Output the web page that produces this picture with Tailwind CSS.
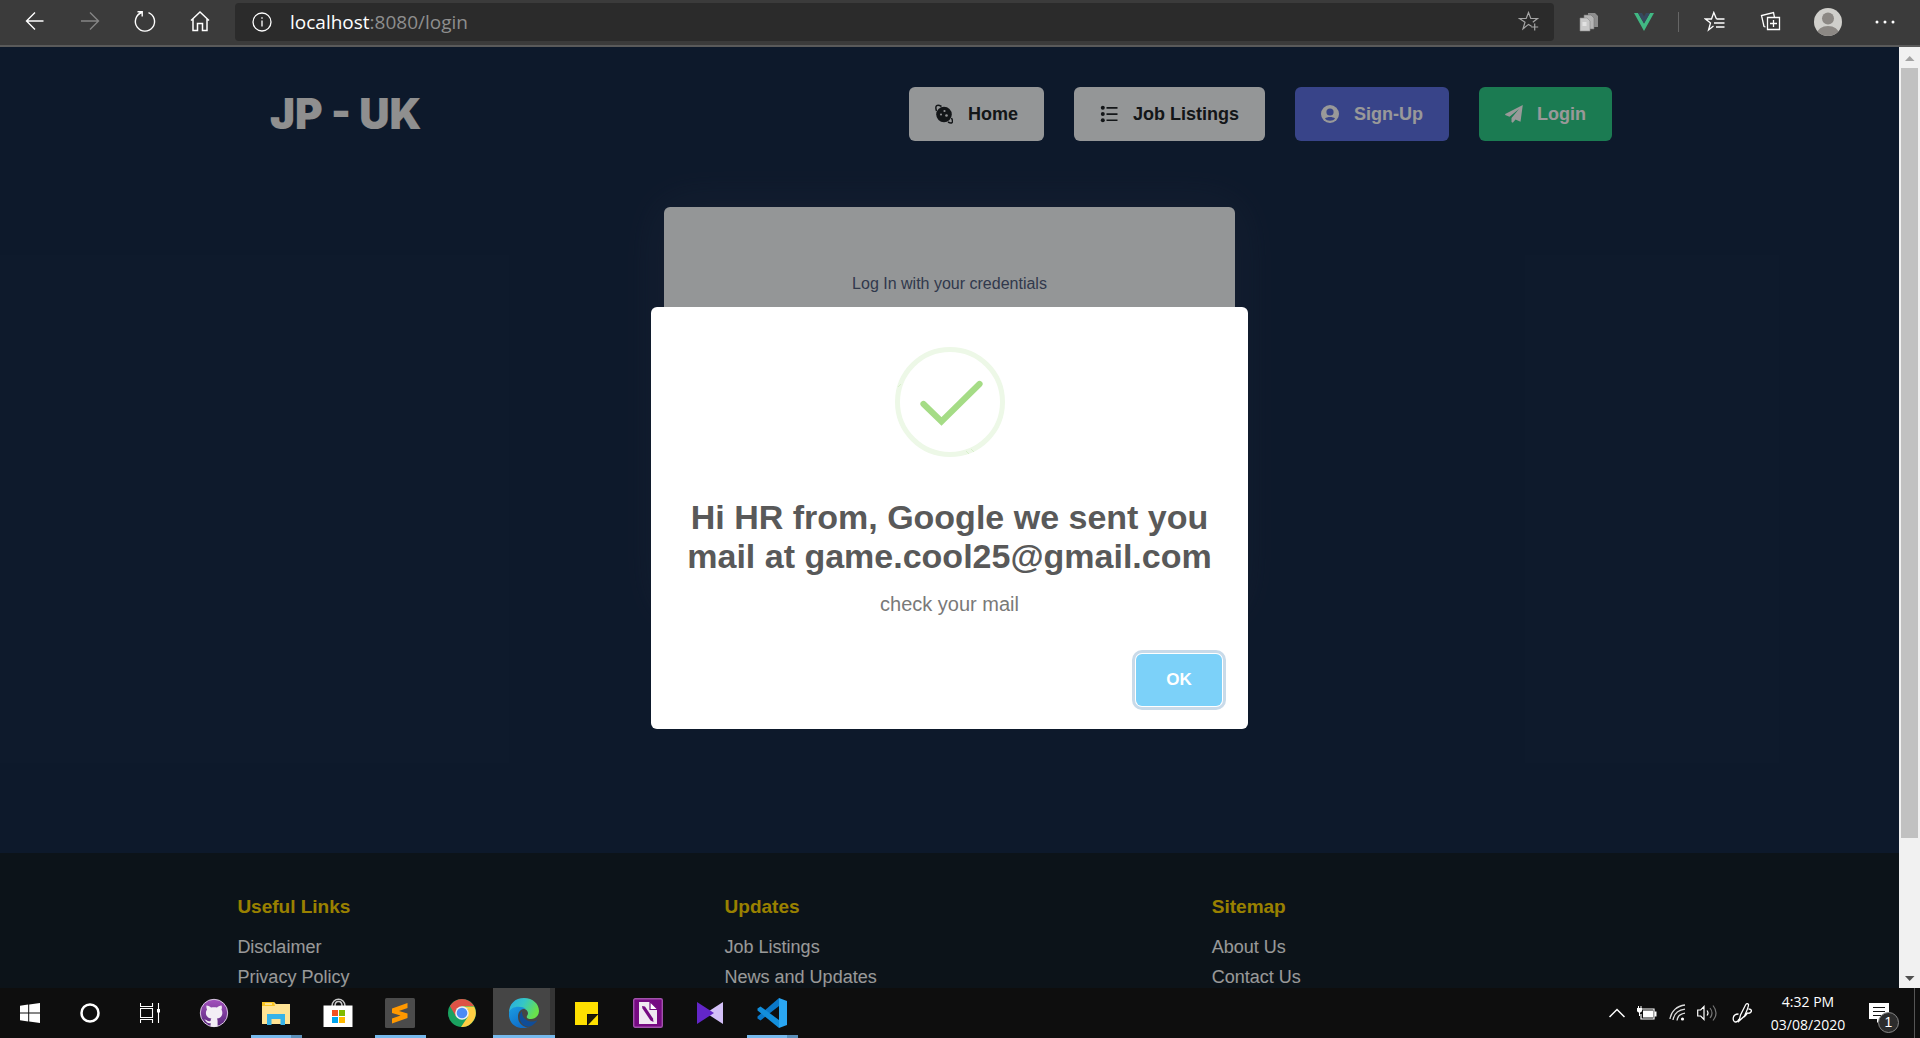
<!DOCTYPE html>
<html lang="en">
<head>
<meta charset="utf-8">
<title>JP - UK Login</title>
<script src="https://cdn.jsdelivr.net/npm/@tailwindcss/browser@4"></script>
</head>
<body class="flex h-screen flex-col overflow-hidden bg-black font-['Liberation_Sans',Arial,sans-serif]">

<!-- Browser toolbar -->
<header class="flex h-[47px] shrink-0 items-start border-b-2 border-[#5a5a5a] bg-[#3b3b3b] pt-[3px] text-white">
  <nav class="flex h-[38px] w-[235px] shrink-0 items-center pl-[7px]" aria-label="Browser">
    <button class="flex w-[55px] justify-center" aria-label="Back"><svg width="24" height="24" viewBox="0 0 24 24" fill="none" stroke="#fff" stroke-width="1.4"><path d="M20.500 11H4M12 2.500L3.500 11L12 19.500"/></svg></button>
    <button class="flex w-[55px] justify-center text-[#858585]" aria-label="Forward"><svg width="24" height="24" viewBox="0 0 24 24" fill="none" stroke="currentColor" stroke-width="1.400"><path d="M3 11h17M12 2.500l8.500 8.500L12 19.500"/></svg></button>
    <button class="flex w-[55px] justify-center" aria-label="Refresh"><svg width="24" height="24" viewBox="0 0 24 24" fill="none" stroke="#fff" stroke-width="1.400"><path d="M15.500 2.600A9.600 9.600 0 1 1 8.700 2.500M4.500 1.700h4.700v4.900"/></svg></button>
    <button class="flex w-[55px] justify-center" aria-label="Home page"><svg width="24" height="24" viewBox="0 0 24 24" fill="none" stroke="#fff" stroke-width="1.500"><path d="M3 10.500L12 2L21 10.500M5 9V20.500h4.500v-7h5v7H19V9"/></svg></button>
  </nav>
  <div class="flex h-[38px] flex-1 items-center rounded bg-[#2b2b2b] pr-[14px] pl-[17px]">
    <svg class="shrink-0" width="20" height="20" viewBox="0 0 20 20" fill="none" stroke="#fff" stroke-width="1.300"><circle cx="10" cy="10" r="9"/><path d="M10 8.500v6M10 5.200v1.600"/></svg>
    <p class="flex-1 pl-[18px] font-['Open_Sans','Noto_Sans',sans-serif] text-[19px] leading-[26px] text-[#8e8e8e]"><span class="text-white">localhost</span>:8080/login</p>
    <button aria-label="Add to favorites"><svg width="22" height="22" viewBox="0 0 22 22" fill="none" stroke="#a5a5a5" stroke-width="1.200"><path d="M13.500 15.200L10.500 13.400L5 17.800L7 11.200L1.500 7.500H8.200L10.500 1.500L12.800 7.500H19.500L14.800 11.200M16.700 12.500v7M13.200 16h7"/></svg></button>
  </div>
  <div class="flex h-[38px] w-[366px] shrink-0 items-center">
    <button class="flex w-[70px] justify-center" aria-label="Copy extension"><svg width="20" height="20" viewBox="0 0 20 20"><path d="M9 1h7l3 3v11H9z" fill="#8e8e8e"/><path d="M5 3h7l3 3v11H5z" fill="#b5b5b5" stroke="#777" stroke-width=".6"/><path d="M1 6h7l3 3v10H1z" fill="#c9c9c9" stroke="#888" stroke-width=".6"/><path d="M3.500 10h4v4h-4z" fill="#e2e2e2"/></svg></button>
    <button class="flex w-10 justify-center" aria-label="Vue devtools"><svg width="20" height="18" viewBox="0 0 20 18"><path d="M0 0h4l6 10.500L16 0h4L10 18z" fill="#41b883"/><path d="M4 0h4l2 3.500L12 0h4l-6 10.500z" fill="#35495e"/></svg></button>
    <span class="mr-6 ml-[14px] h-5 w-px bg-[#666]"></span>
    <button class="flex w-6 justify-center" aria-label="Favorites"><svg width="22" height="22" viewBox="0 0 22 22" fill="none" stroke="#fff" stroke-width="1.300"><path d="M12.500 8L9.800 1.500L7.500 8H1.500L6.500 12L4.500 19L9.500 15M12.500 8h8M10 12h10.500M12 16h8.500"/></svg></button>
    <button class="ml-8 flex w-6 justify-center" aria-label="Collections"><svg width="22" height="22" viewBox="0 0 22 22" fill="none" stroke="#fff" stroke-width="1.300"><path d="M7.500 6.500h12v12h-12zM13.500 9v7M10 12.500h7M5.500 16L4 15.500L1.500 4.500L13.500 1.500L14.500 6.500"/></svg></button>
    <button class="ml-[30px]" aria-label="Profile"><svg width="30" height="30" viewBox="0 0 30 30"><clipPath id="av"><circle cx="15" cy="15" r="14"/></clipPath><circle cx="15" cy="15" r="14" fill="#d0cfcb"/><g clip-path="url(#av)" fill="#8c8884"><circle cx="15" cy="11.500" r="6"/><ellipse cx="15" cy="27" rx="11" ry="8"/></g></svg></button>
    <button class="ml-8" aria-label="Settings and more"><svg width="20" height="6" viewBox="0 0 20 6" fill="#fff"><circle cx="2" cy="3" r="1.500"/><circle cx="10" cy="3" r="1.500"/><circle cx="18" cy="3" r="1.500"/></svg></button>
  </div>
</header>

<div class="flex min-h-0 flex-1">
  <!-- Page -->
  <main class="relative flex min-w-0 flex-1 flex-col overflow-hidden bg-[#172b49]">
    <div class="flex shrink-0 items-center justify-between pt-10 pr-[287px] pl-[270px]">
      <h1 class="font-['Inter',sans-serif] text-[42px] leading-[54px] font-black text-[#eee]">JP - UK</h1>
      <nav class="flex gap-[30px] text-lg font-bold" aria-label="Main">
        <a href="#" class="flex h-[54px] items-center gap-[15px] rounded-md bg-[#f7fafc] px-[26px] text-[#212529]"><svg width="18" height="20" viewBox="0 0 18 20"><circle cx="9" cy="10.500" r="7.800" fill="currentColor"/><path d="M1.500 7C-.5 1 2.500 0 6.500 2.500M16.500 14c2.500 5 0 6-3.500 4" fill="none" stroke="currentColor" stroke-width="1.500"/><circle cx="9.500" cy="7" r="1.100" fill="#f7fafc"/><circle cx="6" cy="10.500" r="1" fill="#f7fafc"/><circle cx="11.500" cy="11.500" r="1.300" fill="#f7fafc"/></svg>Home</a>
        <a href="#" class="flex h-[54px] items-center gap-[15px] rounded-md bg-[#f7fafc] px-[26px] text-[#212529]"><svg width="18" height="18" viewBox="0 0 18 18" fill="currentColor"><circle cx="2.800" cy="2.800" r="2"/><circle cx="2.800" cy="9" r="2"/><circle cx="2.800" cy="15.200" r="2"/><path d="M6.500 2h11v1.700h-11zM6.500 8.200h11v1.700h-11zM6.500 14.400h11v1.700h-11z"/></svg>Job Listings</a>
        <a href="#" class="flex h-[54px] items-center gap-[15px] rounded-md bg-[#5e72e4] px-[26px] text-white"><svg width="18" height="18" viewBox="0 0 18 18"><circle cx="9" cy="9" r="9" fill="currentColor"/><circle cx="9" cy="7" r="3.600" fill="#5e72e4"/><path d="M4 13.500c2-2 8-2 10 0c-2 3-8 3-10 0z" fill="#5e72e4"/></svg>Sign-Up</a>
        <a href="#" class="flex h-[54px] items-center gap-[14px] rounded-md bg-[#2dce89] px-[26px] text-white"><svg width="18" height="18" viewBox="0 0 18 18" fill="currentColor"><path d="M17.800 0L15.500 16.800L10.500 14.600L7.800 17.800L6.500 17V13L14 4L4.500 11.800L.2 10V9z"/></svg>Login</a>
      </nav>
    </div>

    <section class="mx-auto mt-[66px] min-h-[400px] w-full max-w-[571px] rounded-md bg-[#f7fafc] pt-[65px] text-center shadow-[0_0_50px_rgba(60,66,94,0.45)]">
      <p class="text-base leading-6 text-[#525f7f]">Log In with your credentials</p>
    </section>

    <footer class="mt-auto grid h-[135px] shrink-0 grid-cols-3 bg-[#14212a] pt-10 pr-[200px] pl-[12.5%] text-lg leading-[30px] text-white">
      <section>
        <h2 class="mb-[11px] text-[19px] leading-7 font-bold text-[#ffd700]">Useful Links</h2>
        <ul><li><a href="#">Disclaimer</a></li><li><a href="#">Privacy Policy</a></li></ul>
      </section>
      <section>
        <h2 class="mb-[11px] text-[19px] leading-7 font-bold text-[#ffd700]">Updates</h2>
        <ul><li><a href="#">Job Listings</a></li><li><a href="#">News and Updates</a></li></ul>
      </section>
      <section>
        <h2 class="mb-[11px] text-[19px] leading-7 font-bold text-[#ffd700]">Sitemap</h2>
        <ul><li><a href="#">About Us</a></li><li><a href="#">Contact Us</a></li></ul>
      </section>
    </footer>

    <!-- Modal -->
    <div class="absolute inset-0 flex items-center justify-center bg-black/40">
      <div class="flex w-[597px] flex-col rounded-md bg-white pt-10 text-center" role="dialog" aria-modal="true" aria-labelledby="modal-title">
        <svg class="mx-auto" width="110" height="110" viewBox="0 0 110 110" fill="none"><circle cx="55" cy="55" r="52.500" stroke="#edf8e7" stroke-width="5"/><path d="M28.500 57L46.500 74.500L84.500 37" stroke="#a5dc86" stroke-width="6.200" stroke-linecap="round"/><path d="M3 40l3-3M71 104l3 3M76 102l3 3" stroke="#d8efcb" stroke-width="1"/></svg>
        <h2 id="modal-title" class="mt-[41px] px-5 text-[34px] leading-[39px] font-bold text-[#595959]">Hi HR from, Google we sent you<br>mail at game.cool25@gmail.com</h2>
        <p class="mt-[14px] text-xl leading-7 text-[#797979]">check your mail</p>
        <div class="mt-9 flex justify-end pr-[26px] pb-[23px]">
          <button class="h-[52px] w-[86px] rounded-md bg-[#7cd1f9] text-[17px] font-bold text-white shadow-[0_0_0_1px_#fff,0_0_0_4px_#c8dae9]">OK</button>
        </div>
      </div>
    </div>
  </main>

  <!-- Scrollbar -->
  <div class="flex w-[21px] shrink-0 flex-col items-center bg-[#f1f1f1]" aria-hidden="true">
    <svg class="shrink-0" width="21" height="21" viewBox="0 0 21 21"><path d="M6 14h9.500L10.700 9z" fill="#a3a3a3"/></svg>
    <span class="w-[17px] flex-[770] bg-[#c1c1c1]"></span>
    <span class="flex-[129]"></span>
    <svg class="shrink-0" width="21" height="21" viewBox="0 0 21 21"><path d="M6 9h9.500L10.700 14z" fill="#505050"/></svg>
  </div>
</div>

<!-- Taskbar -->
<footer class="flex h-[50px] shrink-0 bg-[#0e0e0e] text-white">
  <button class="flex w-[60px] items-center justify-center" aria-label="Start"><svg width="20" height="20" viewBox="0 0 20 20" fill="#fff"><path d="M0 2.800L8.200 1.600V9.500H0zM9.200 1.400L20 0V9.500H9.200zM0 10.500h8.200v8L0 17.300zM9.200 10.500H20V20L9.200 18.600z"/></svg></button>
  <button class="flex w-[60px] items-center justify-center" aria-label="Cortana"><svg width="20" height="20" viewBox="0 0 20 20" fill="none" stroke="#fff" stroke-width="2.500"><circle cx="10" cy="10" r="8.500"/></svg></button>
  <button class="mr-[3px] flex w-[60px] items-center justify-center" aria-label="Task view"><svg width="20" height="20" viewBox="0 0 20 20" fill="none" stroke="#fff" stroke-width="1.100"><path d="M.5 0v3.500h12V0M.5 20v-3.500h12V20M.5 5.500h12v9H.5zM18.500 0v20"/><path d="M17 6h3v3.500h-3z" fill="#fff" stroke="none"/></svg></button>
  <div class="flex gap-px">
    <button class="flex w-[61px] items-center justify-center" aria-label="GitHub Desktop"><svg width="30" height="30" viewBox="0 0 30 30"><defs><linearGradient id="gh" x2="0" y2="1"><stop stop-color="#a352bd"/><stop offset="1" stop-color="#59277d"/></linearGradient></defs><circle cx="15" cy="15" r="13.700" fill="url(#gh)" stroke="#d7c8df" stroke-width="1"/><path d="M7.500 7.500c2 0 3.500 1 4.500 2c2-.5 4-.5 6 0c1-1 2.500-2 4.500-2c.6 1.500.5 3 0 4c2 4 .5 8.500-4.500 9c.5 1 .6 2 .6 3v5c-2 .5-5 .5-7 0V25c-4 1-4-2-6.500-3.500c3 0 3 2.500 6.500 1.500c0-1 .3-2 .8-2.500c-5-.5-7-5-4.400-9c-.5-1-.8-2.500-.5-4z" fill="#f2eef5"/></svg></button>
    <button class="relative flex w-[61px] items-center justify-center" aria-label="File Explorer"><svg width="28" height="24" viewBox="0 0 28 24"><path d="M0 1h12l2 2h14v20H0z" fill="#ffe394"/><path d="M0 1h12l1 4H0z" fill="#f9c524"/><path d="M3 2.500h7v1H3z" fill="#fff"/><path d="M5 24V13h18v11h-4.500v-6h-9v6z" fill="#37b3e8"/></svg><span class="absolute bottom-0 left-[6px] flex h-[3px] w-[51px] bg-[#76b9ed]"><span class="ml-auto w-[11px] bg-[#5b8fb9]"></span></span></button>
    <button class="flex w-[61px] items-center justify-center" aria-label="Microsoft Store"><svg width="30" height="30" viewBox="0 0 30 30"><path d="M9 8c0-9 13-9 13 0M12 8c0-6 7-6 7 0" fill="none" stroke="#c9c9c9" stroke-width="1.500"/><path d="M.5 7.500h29V29H.5z" fill="#fff"/><path d="M9 12h6v6H9z" fill="#f25022"/><path d="M16 12h6v6h-6z" fill="#7fba00"/><path d="M9 19h6v6H9z" fill="#00a4ef"/><path d="M16 19h6v6h-6z" fill="#ffb900"/></svg></button>
    <button class="relative flex w-[61px] items-center justify-center" aria-label="Sublime Text"><svg width="30" height="30" viewBox="0 0 30 30"><rect width="30" height="30" rx="1.500" fill="#4b4b4b"/><path d="M7 10.500L22.500 5V10L14 13l8.500 2.500V20L7 25.500V20.500L15.500 17.500L7 15z" fill="#ff9800"/></svg><span class="absolute bottom-0 left-[6px] h-[3px] w-[51px] bg-[#76b9ed]"></span></button>
    <button class="flex w-[61px] items-center justify-center" aria-label="Google Chrome"><svg width="28" height="28" viewBox="0 0 28 28"><circle cx="14" cy="14" r="14" fill="#1aa260"/><path d="M1.900 7A14 14 0 0 1 26.100 7H14L8 10.500L8 17.500z" fill="#de5246"/><path d="M26.100 7.500A14 14 0 0 1 13 28L20 17.500L20 10.500L14 7.500z" fill="#ffce44"/><circle cx="14" cy="14" r="6.800" fill="#f1f1f1"/><circle cx="14" cy="14" r="5.300" fill="#4c8bf5"/></svg></button>
    <button class="relative flex w-[62px] items-center justify-center border-r-[5px] border-[#353535] bg-[#454545] pl-[5px]" aria-label="Microsoft Edge"><svg width="30" height="30" viewBox="0 0 30 30"><defs><linearGradient id="e1" x2="1" y2=".4"><stop stop-color="#27a9e5"/><stop offset=".5" stop-color="#35c6c7"/><stop offset="1" stop-color="#69e04b"/></linearGradient><linearGradient id="e2" x2=".6" y2="1"><stop stop-color="#1b9de2"/><stop offset="1" stop-color="#0f6cc9"/></linearGradient></defs><path d="M0 15C0 6 6 0 15 0c9 0 15 6 15 13c0 5-4 8-8 8c-3 0-5-1-4-3c3-4-1-8-7-8C6 10 1 12 0 15z" fill="url(#e1)"/><path d="M0 15c1-7 12-8 17-4c-5-1-8 3-8 8c0 6 5 11 11 10C9 33-1 26 0 15z" fill="url(#e2)"/><path d="M13 13c-6 7 0 17 8 15.500c3-1 6-4 7.500-6.500c-7 4-16 0-15.500-9z" fill="#104d98"/></svg><span class="absolute -right-[5px] bottom-0 left-0 h-[3px] bg-[#76b9ed]"></span></button>
    <button class="flex w-[60px] items-center justify-center" aria-label="Sticky Notes"><svg width="23" height="23" viewBox="0 0 23 23"><path d="M0 0h23v12H12v11H0z" fill="#ffe000"/><path d="M23 13L13 23V13z" fill="#1e1a05"/><path d="M23 12.500V23H13z" fill="#ffe000"/></svg></button>
    <button class="flex w-[61px] items-center justify-center" aria-label="Editor"><svg width="30" height="30" viewBox="0 0 30 30"><rect x=".7" y=".7" width="28.600" height="28.600" rx="1.500" fill="#760a82" stroke="#a252ac" stroke-width="1.400"/><path d="M6 4h11l7 7v15H6z" fill="#f0e8f2"/><path d="M17 3.500l8 8h-8z" fill="#fff" stroke="#760a82" stroke-width="1.200"/><path d="M9 8l3 .5l8 12l.5 3.500l-3-1.500l-8-12z" fill="#760a82"/></svg></button>
    <button class="flex w-[61px] items-center justify-center" aria-label="Visual Studio"><svg width="26" height="22" viewBox="0 0 26 22"><path d="M26 0v22L9 11z" fill="#d3c0f7"/><path d="M0 0L17 11L0 22z" fill="#6326c8"/></svg></button>
    <button class="relative flex w-[61px] items-center justify-center" aria-label="Visual Studio Code"><svg width="30" height="30" viewBox="0 0 30 30"><path d="M22 0L30 3V27L22 30z" fill="#2aa6f2"/><path d="M22 0v8L3.500 22.500L.5 20.500V18.500z" fill="#0a78c9"/><path d="M22 30v-8L3.500 8.500L.5 10.500v2z" fill="#138fdc"/></svg><span class="absolute bottom-0 left-[6px] flex h-[3px] w-[51px] bg-[#76b9ed]"><span class="ml-auto w-[11px] bg-[#5b8fb9]"></span></span></button>
  </div>
  <div class="ml-auto flex items-center">
    <button aria-label="Show hidden icons"><svg width="16" height="10" viewBox="0 0 16 10" fill="none" stroke="#fff" stroke-width="1.500"><path d="M.5 9L8 1.500L15.500 9"/></svg></button>
    <svg class="ml-3" width="20" height="14" viewBox="0 0 20 14"><path d="M4 3h13v10H4V8" fill="none" stroke="#fff" stroke-width="1.200"/><path d="M6 4.500h10v7H6zM17.500 5.500H19.500v5h-2zM0 2h5v3c-1 2-4 2-5 0zM1 0h1v2H1zM3.500 0h1v2h-1zM2 6h1v4H2z" fill="#fff"/></svg>
    <svg class="ml-3" width="18" height="18" viewBox="0 0 18 18" fill="none" stroke="#ddd" stroke-width="1.300"><path d="M1 15C2 7 8 2 16 1M4 16C5 10 9 6 16 5.200M8 16.500C8.500 12.500 11.500 9.800 16 9.200"/><circle cx="13.500" cy="15" r="1.600" fill="#fff" stroke="none"/></svg>
    <svg class="ml-[10px]" width="20" height="18" viewBox="0 0 20 18" fill="none" stroke="#fff" stroke-width="1.200"><path d="M.7 6h3L7 2.500v13L3.700 12h-3zM10 6.500q2 2.500 0 5"/><path d="M13 4q4 5 0 10M16 1.500q6 7.500 0 15" stroke="#777"/></svg>
    <svg class="ml-[15px]" width="20" height="22" viewBox="0 0 20 22" fill="none" stroke="#fff" stroke-width="1.300"><path d="M7 19L8.500 13L13.500 3Q15 .5 16.500 2.500Q17 4 12.500 14zM6.500 12C-.5 12 .5 20 3.500 20q2.500 0 3.500-3M12 15q2-2 3.500-4q3 1 4-2q0-2-3-2"/></svg>
    <p class="ml-[14px] w-[84px] text-center font-['Open_Sans','Noto_Sans',sans-serif] text-[14px] leading-[23px]">4:32 PM<br>03/08/2020</p>
    <button class="relative ml-[19px]" aria-label="Notifications, 1 new"><svg width="20" height="21" viewBox="0 0 20 21"><path d="M0 0h20v16H12l-4 4v-4H0z" fill="#fff"/><path d="M4 4.500h12M4 8.500h12M4 12.500h8" stroke="#111" stroke-width="1.200"/></svg><span class="absolute top-[9px] left-[9px] flex size-[21px] items-center justify-center rounded-full border border-[#888] bg-[#2c2c2c] text-[14px]">1</span></button>
    <span class="mr-[5px] ml-[25px] h-[50px] w-px bg-[#555]"></span>
  </div>
</footer>
</body>
</html>
